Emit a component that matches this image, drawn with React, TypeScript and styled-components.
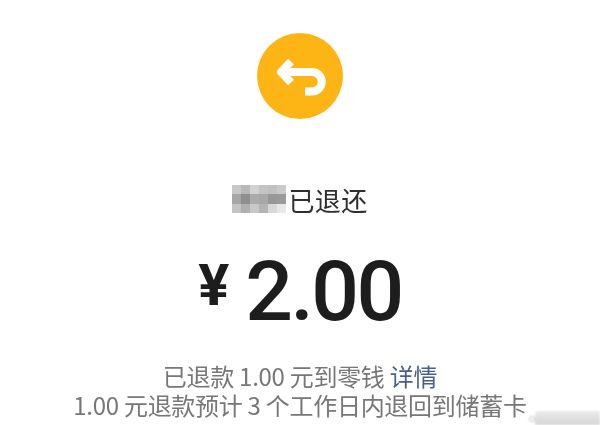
import React from "react";
import styled, { createGlobalStyle } from "styled-components";

const Global = createGlobalStyle`
  html, body { margin: 0; padding: 0; background: #fff; }
  body { font-family: "Noto Sans CJK SC", "Noto Sans", sans-serif; }
`;

const Page = styled.main`
  position: relative;
  width: 600px;
  height: 425px;
  overflow: hidden;
  background: #fff;
  display: flex;
  flex-direction: column;
  align-items: center;
  padding-top: 33px;
  box-sizing: border-box;
  filter: blur(0.45px);
`;

const Badge = styled.div`
  width: 86px;
  height: 86px;
  border-radius: 50%;
  background: #fdb515;
  display: flex;
  align-items: center;
  justify-content: center;
`;

const TitleRow = styled.div`
  margin-top: 66px;
  height: 30px;
  display: flex;
  align-items: center;
  gap: 2px;
`;

const Mosaic = styled.div`
  display: grid;
  grid-template-columns: repeat(6, 9px);
  grid-auto-rows: 9.4px;
  margin-top: -2px;
  filter: blur(0.6px);
`;

const Cell = styled.span<{ $c: string }>`
  background: ${(p) => p.$c};
`;

const Title = styled.h1`
  margin: 0;
  font-size: 26px;
  font-weight: 400;
  letter-spacing: 0.4px;
  line-height: 30px;
  color: #2f2f2f;
`;

const AmountRow = styled.div`
  margin-top: 35px;
  height: 84px;
  display: flex;
  align-items: center;
  gap: 16px;
  color: #1d1d1d;
`;

const Currency = styled.span`
  font-family: Roboto, "Liberation Sans", sans-serif;
  font-size: 58px;
  font-weight: 700;
  line-height: 84px;
  transform: translateY(-7px);
`;

const Value = styled.span`
  font-family: Roboto, "Liberation Sans", sans-serif;
  font-size: 84px;
  font-weight: 500;
  line-height: 84px;
  letter-spacing: -2.5px;
`;

const Notes = styled.div`
  margin-top: 27px;
  display: flex;
  flex-direction: column;
  align-items: center;
  font-size: 24px;
  line-height: 29px;
  font-weight: 400;
  letter-spacing: -0.28px;
  color: #777;
`;

const Line = styled.p`
  margin: 0;
  white-space: pre;
`;

const Link = styled.span`
  color: #4a5f86;
`;

const Watermark = styled.div`
  position: absolute;
  right: 0;
  bottom: 0;
  width: 65px;
  height: 14px;
  background: linear-gradient(180deg, #ececec, #dedede 60%, #d6d6d6);
  border-radius: 3px 0 0 0;
  filter: blur(0.8px);

  &::before {
    content: "";
    position: absolute;
    left: -6px;
    bottom: 3px;
    width: 6px;
    height: 6px;
    border: 1.5px solid #c4c4c4;
    border-radius: 50%;
    box-sizing: border-box;
  }
`;

const cells = [
  "#c8c8c8", "#b8b8b8", "#d2d2d2", "#c4c4c4", "#c0c0c0", "#cacaca",
  "#a6a6a6", "#8f8f8f", "#ababab", "#a8a8a8", "#989898", "#9a9a9a",
  "#c4c4c4", "#b0b0b0", "#c8c8c8", "#b4b4b4", "#d8d8d8", "#e8e8e8",
];

export default function App() {
  return (
    <>
      <Global />
      <Page>
        <Badge>
          <svg width="86" height="86" viewBox="0 0 86 86" fill="none">
            <path
              d="M34 28.5 L24 39 L34 49.5 M25 39 H55 A9.75 9.75 0 0 1 55 58.5 H48"
              stroke="#fff"
              strokeWidth="8"
              strokeLinecap="butt"
              strokeLinejoin="round"
            />
          </svg>
        </Badge>
        <TitleRow>
          <Mosaic>
            {cells.map((c, i) => (
              <Cell key={i} $c={c} />
            ))}
          </Mosaic>
          <Title>已退还</Title>
        </TitleRow>
        <AmountRow>
          <Currency>¥</Currency>
          <Value>2.00</Value>
        </AmountRow>
        <Notes>
          <Line>
            已退款 1.00 元到零钱 <Link>详情</Link>
          </Line>
          <Line>1.00 元退款预计 3 个工作日内退回到储蓄卡</Line>
        </Notes>
        <Watermark />
      </Page>
    </>
  );
}
